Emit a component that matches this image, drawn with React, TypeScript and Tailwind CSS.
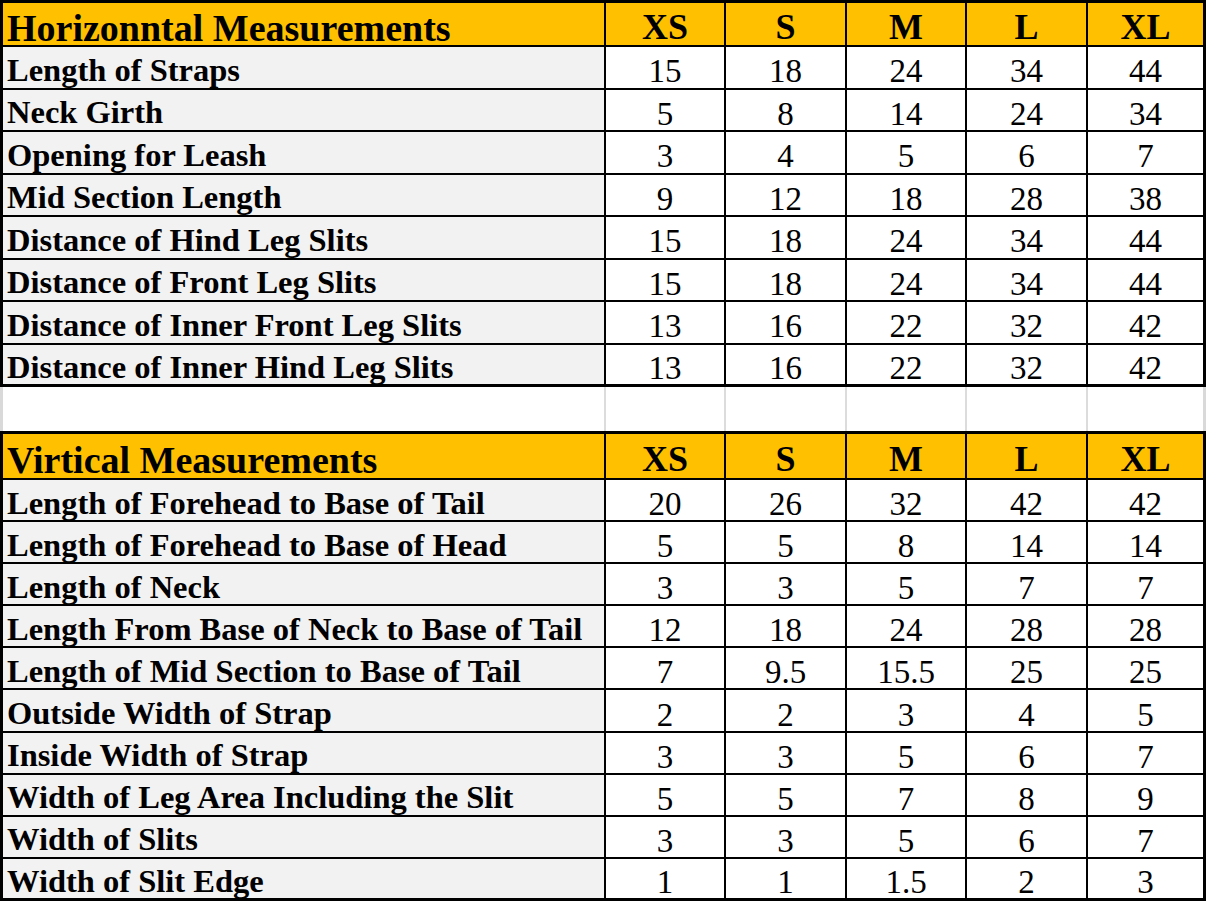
const sizes = ['XS', 'S', 'M', 'L', 'XL']

type Row = { label: string; values: string[] }

const horizontal: Row[] = [
  { label: 'Length of Straps', values: ['15', '18', '24', '34', '44'] },
  { label: 'Neck Girth', values: ['5', '8', '14', '24', '34'] },
  { label: 'Opening for Leash', values: ['3', '4', '5', '6', '7'] },
  { label: 'Mid Section Length', values: ['9', '12', '18', '28', '38'] },
  { label: 'Distance of Hind Leg Slits', values: ['15', '18', '24', '34', '44'] },
  { label: 'Distance of Front Leg Slits', values: ['15', '18', '24', '34', '44'] },
  { label: 'Distance of Inner Front Leg Slits', values: ['13', '16', '22', '32', '42'] },
  { label: 'Distance of Inner Hind Leg Slits', values: ['13', '16', '22', '32', '42'] },
]

const vertical: Row[] = [
  { label: 'Length of Forehead to Base of Tail', values: ['20', '26', '32', '42', '42'] },
  { label: 'Length of Forehead to Base of Head', values: ['5', '5', '8', '14', '14'] },
  { label: 'Length of Neck', values: ['3', '3', '5', '7', '7'] },
  { label: 'Length From Base of Neck to Base of Tail', values: ['12', '18', '24', '28', '28'] },
  { label: 'Length of Mid Section to Base of Tail', values: ['7', '9.5', '15.5', '25', '25'] },
  { label: 'Outside Width of Strap', values: ['2', '2', '3', '4', '5'] },
  { label: 'Inside Width of Strap', values: ['3', '3', '5', '6', '7'] },
  { label: 'Width of Leg Area Including the Slit', values: ['5', '5', '7', '8', '9'] },
  { label: 'Width of Slits', values: ['3', '3', '5', '6', '7'] },
  { label: 'Width of Slit Edge', values: ['1', '1', '1.5', '2', '3'] },
]

const cols = 'grid grid-cols-[601px_120px_121px_120px_121px_117px]'

function HeaderRow({ title, height }: { title: string; height: string }) {
  return (
    <div className={`${cols} ${height} overflow-hidden bg-[#ffc000] border-b-2 border-black`}>
      <div className="flex items-center pl-[4px] pt-[7px] text-[38px] font-bold leading-[30px]">
        {title}
      </div>
      {sizes.map((s) => (
        <div
          key={s}
          className="flex items-center justify-center pt-[6px] border-l-2 border-black text-[36px] font-bold leading-[30px]"
        >
          {s}
        </div>
      ))}
    </div>
  )
}

function DataRow({ row, last, height }: { row: Row; last: boolean; height: string }) {
  return (
    <div
      className={`${cols} ${height} overflow-hidden ${last ? 'border-b-[3px]' : 'border-b-2'} border-black`}
    >
      <div className="flex items-center bg-[#f2f2f2] pl-[4px] pt-[5px] text-[32.5px] font-bold leading-[28px] whitespace-nowrap">
        {row.label}
      </div>
      {row.values.map((v, i) => (
        <div
          key={i}
          className="flex items-center justify-center pt-[8px] border-l-2 border-black bg-white text-[33px] leading-[26px]"
        >
          {v}
        </div>
      ))}
    </div>
  )
}

function Section({
  title,
  rows,
  headerHeight,
  rowHeight,
}: {
  title: string
  rows: Row[]
  headerHeight: string
  rowHeight: string
}) {
  return (
    <div className="border-x-[3px] border-t-[3px] border-black">
      <HeaderRow title={title} height={headerHeight} />
      {rows.map((r, i) => (
        <DataRow key={r.label} row={r} last={i === rows.length - 1} height={rowHeight} />
      ))}
    </div>
  )
}

export default function App() {
  return (
    <div
      className="w-[1208px] h-[906px] overflow-hidden bg-white text-black"
      style={{ fontFamily: '"Liberation Serif", "Times New Roman", serif' }}
    >
      <div className="w-[1206px]">
        <Section
          title="Horizonntal Measurements"
          rows={horizontal}
          headerHeight="h-[44px]"
          rowHeight="h-[42.5px]"
        />
        <div className={`${cols} h-[44px] border-x-[3px] border-[#d9d9d9]`}>
          <div className="bg-white" />
          {sizes.map((s) => (
            <div key={s} className="border-l-2 border-[#dcdcdc] bg-white" />
          ))}
        </div>
        <Section
          title="Virtical Measurements"
          rows={vertical}
          headerHeight="h-[46px]"
          rowHeight="h-[42.1px]"
        />
      </div>
    </div>
  )
}
